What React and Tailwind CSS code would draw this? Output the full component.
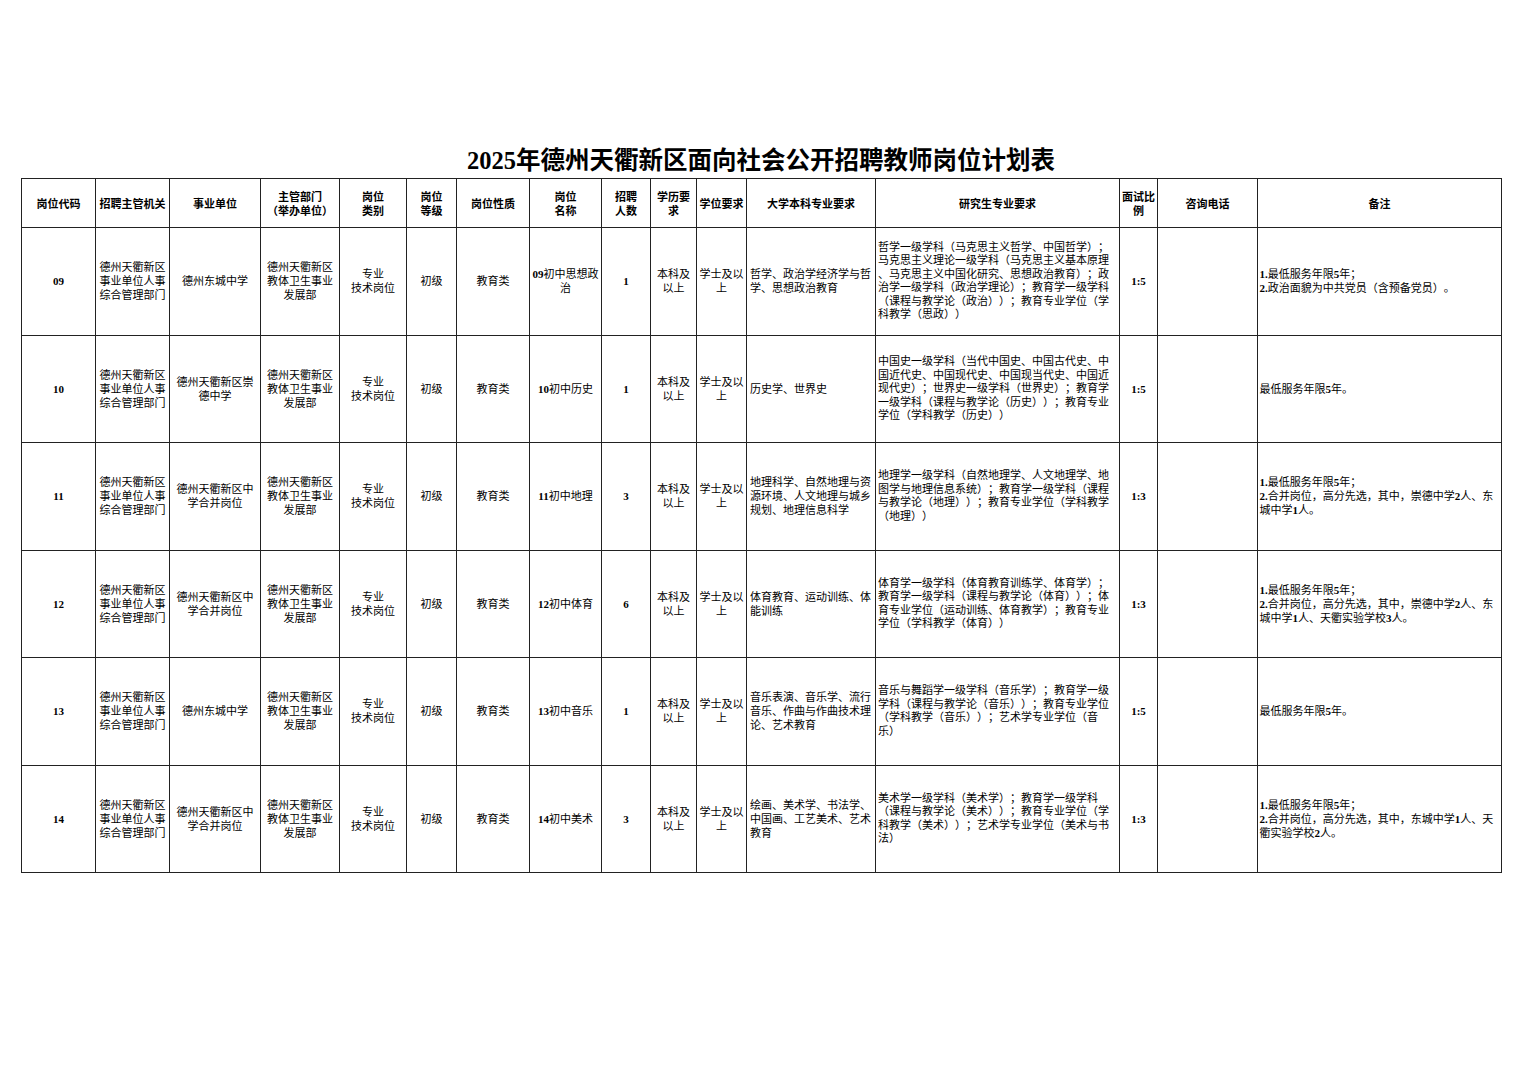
import React from "react";

const FONT = { fontFamily: '"Liberation Serif", "Noto Sans CJK SC", serif' };

function Rich({ text }) {
  const parts = text.split(/([0-9.:]+)/);
  return (
    <>
      {parts.map((p, i) =>
        /^[0-9.:]+$/.test(p) ? (
          <span key={i} className="font-bold">
            {p}
          </span>
        ) : (
          <React.Fragment key={i}>{p}</React.Fragment>
        )
      )}
    </>
  );
}

function Lines({ lines }) {
  return (
    <>
      {lines.map((l, i) => (
        <div key={i} className="whitespace-nowrap">
          <Rich text={l} />
        </div>
      ))}
    </>
  );
}

const ORG = ["德州天衢新区", "事业单位人事", "综合管理部门"];
const DEPT = ["德州天衢新区", "教体卫生事业", "发展部"];
const TYPE = ["专业", "技术岗位"];

const rows = [
  {
    code: "09",
    unit: ["德州东城中学"],
    name: ["09初中思想政", "治"],
    count: "1",
    ug: ["哲学、政治学经济学与哲", "学、思想政治教育"],
    grad: [
      "哲学一级学科（马克思主义哲学、中国哲学）；",
      "马克思主义理论一级学科（马克思主义基本原理",
      "、马克思主义中国化研究、思想政治教育）；政",
      "治学一级学科（政治学理论）；教育学一级学科",
      "（课程与教学论（政治））；教育专业学位（学",
      "科教学（思政））",
    ],
    ratio: "1:5",
    note: ["1.最低服务年限5年；", "2.政治面貌为中共党员（含预备党员）。"],
  },
  {
    code: "10",
    unit: ["德州天衢新区崇", "德中学"],
    name: ["10初中历史"],
    count: "1",
    ug: ["历史学、世界史"],
    grad: [
      "中国史一级学科（当代中国史、中国古代史、中",
      "国近代史、中国现代史、中国现当代史、中国近",
      "现代史）；世界史一级学科（世界史）；教育学",
      "一级学科（课程与教学论（历史））；教育专业",
      "学位（学科教学（历史））",
    ],
    ratio: "1:5",
    note: ["最低服务年限5年。"],
  },
  {
    code: "11",
    unit: ["德州天衢新区中", "学合并岗位"],
    name: ["11初中地理"],
    count: "3",
    ug: ["地理科学、自然地理与资", "源环境、人文地理与城乡", "规划、地理信息科学"],
    grad: [
      "地理学一级学科（自然地理学、人文地理学、地",
      "图学与地理信息系统）；教育学一级学科（课程",
      "与教学论（地理））；教育专业学位（学科教学",
      "（地理））",
    ],
    ratio: "1:3",
    note: [
      "1.最低服务年限5年；",
      "2.合并岗位，高分先选，其中，崇德中学2人、东",
      "城中学1人。",
    ],
  },
  {
    code: "12",
    unit: ["德州天衢新区中", "学合并岗位"],
    name: ["12初中体育"],
    count: "6",
    ug: ["体育教育、运动训练、体", "能训练"],
    grad: [
      "体育学一级学科（体育教育训练学、体育学）；",
      "教育学一级学科（课程与教学论（体育））；体",
      "育专业学位（运动训练、体育教学）；教育专业",
      "学位（学科教学（体育））",
    ],
    ratio: "1:3",
    note: [
      "1.最低服务年限5年；",
      "2.合并岗位，高分先选，其中，崇德中学2人、东",
      "城中学1人、天衢实验学校3人。",
    ],
  },
  {
    code: "13",
    unit: ["德州东城中学"],
    name: ["13初中音乐"],
    count: "1",
    ug: ["音乐表演、音乐学、流行", "音乐、作曲与作曲技术理", "论、艺术教育"],
    grad: [
      "音乐与舞蹈学一级学科（音乐学）；教育学一级",
      "学科（课程与教学论（音乐））；教育专业学位",
      "（学科教学（音乐））；艺术学专业学位（音",
      "乐）",
    ],
    ratio: "1:5",
    note: ["最低服务年限5年。"],
  },
  {
    code: "14",
    unit: ["德州天衢新区中", "学合并岗位"],
    name: ["14初中美术"],
    count: "3",
    ug: ["绘画、美术学、书法学、", "中国画、工艺美术、艺术", "教育"],
    grad: [
      "美术学一级学科（美术学）；教育学一级学科",
      "（课程与教学论（美术））；教育专业学位（学",
      "科教学（美术））；艺术学专业学位（美术与书",
      "法）",
    ],
    ratio: "1:3",
    note: [
      "1.最低服务年限5年；",
      "2.合并岗位，高分先选，其中，东城中学1人、天",
      "衢实验学校2人。",
    ],
  },
];

const headers = [
  ["岗位代码"],
  ["招聘主管机关"],
  ["事业单位"],
  ["主管部门", "（举办单位）"],
  ["岗位", "类别"],
  ["岗位", "等级"],
  ["岗位性质"],
  ["岗位", "名称"],
  ["招聘", "人数"],
  ["学历要", "求"],
  ["学位要求"],
  ["大学本科专业要求"],
  ["研究生专业要求"],
  ["面试比", "例"],
  ["咨询电话"],
  ["备注"],
];

const td = "border-[1.5px] border-[#222] align-middle p-0";

export default function App() {
  return (
    <div className="w-[1527px] h-[1080px] bg-white text-black [text-spacing-trim:space-all]" style={FONT}>
      <div className="pt-[146px] pl-[21px]">
        <div className="w-[1480px] text-center text-[24.5px] leading-[29px] font-bold mb-[3px]">
          <span className="whitespace-nowrap">2025年德州天衢新区面向社会公开招聘教师岗位计划表</span>
        </div>
        <table className="w-[1480px] table-fixed border-collapse text-[11px] leading-[14px]">
          <colgroup>
            <col className="w-[74px]" />
            <col className="w-[74px]" />
            <col className="w-[91px]" />
            <col className="w-[79px]" />
            <col className="w-[67px]" />
            <col className="w-[50px]" />
            <col className="w-[73px]" />
            <col className="w-[72px]" />
            <col className="w-[49px]" />
            <col className="w-[46px]" />
            <col className="w-[50px]" />
            <col className="w-[129px]" />
            <col className="w-[244px]" />
            <col className="w-[38px]" />
            <col className="w-[100px]" />
            <col className="w-[244px]" />
          </colgroup>
          <thead>
            <tr className="h-[49px]">
              {headers.map((h, i) => (
                <th key={i} className={`${td} text-center font-bold leading-[14px]`} style={{ fontFamily: '"Noto Sans CJK SC", sans-serif' }}>
                  {h.map((l, j) => (
                    <div key={j} className="whitespace-nowrap">
                      {l}
                    </div>
                  ))}
                </th>
              ))}
            </tr>
          </thead>
          <tbody>
            {rows.map((r) => (
              <tr key={r.code} className="h-[107.5px]">
                <td className={`${td} text-center font-bold`}>{r.code}</td>
                <td className={`${td} text-center`}>
                  <Lines lines={ORG} />
                </td>
                <td className={`${td} text-center`}>
                  <Lines lines={r.unit} />
                </td>
                <td className={`${td} text-center`}>
                  <Lines lines={DEPT} />
                </td>
                <td className={`${td} text-center`}>
                  <Lines lines={TYPE} />
                </td>
                <td className={`${td} text-center`}>初级</td>
                <td className={`${td} text-center`}>教育类</td>
                <td className={`${td} text-center`}>
                  <Lines lines={r.name} />
                </td>
                <td className={`${td} text-center font-bold`}>{r.count}</td>
                <td className={`${td} text-center`}>
                  <Lines lines={["本科及", "以上"]} />
                </td>
                <td className={`${td} text-center`}>
                  <Lines lines={["学士及以", "上"]} />
                </td>
                <td className={`${td} text-left pl-[3px]`}>
                  <Lines lines={r.ug} />
                </td>
                <td className={`${td} text-left pl-[2px] leading-[13.5px]`}>
                  <Lines lines={r.grad} />
                </td>
                <td className={`${td} text-center font-bold`}>{r.ratio}</td>
                <td className={td}></td>
                <td className={`${td} text-left pl-[1.5px]`}>
                  <Lines lines={r.note} />
                </td>
              </tr>
            ))}
          </tbody>
        </table>
      </div>
    </div>
  );
}
